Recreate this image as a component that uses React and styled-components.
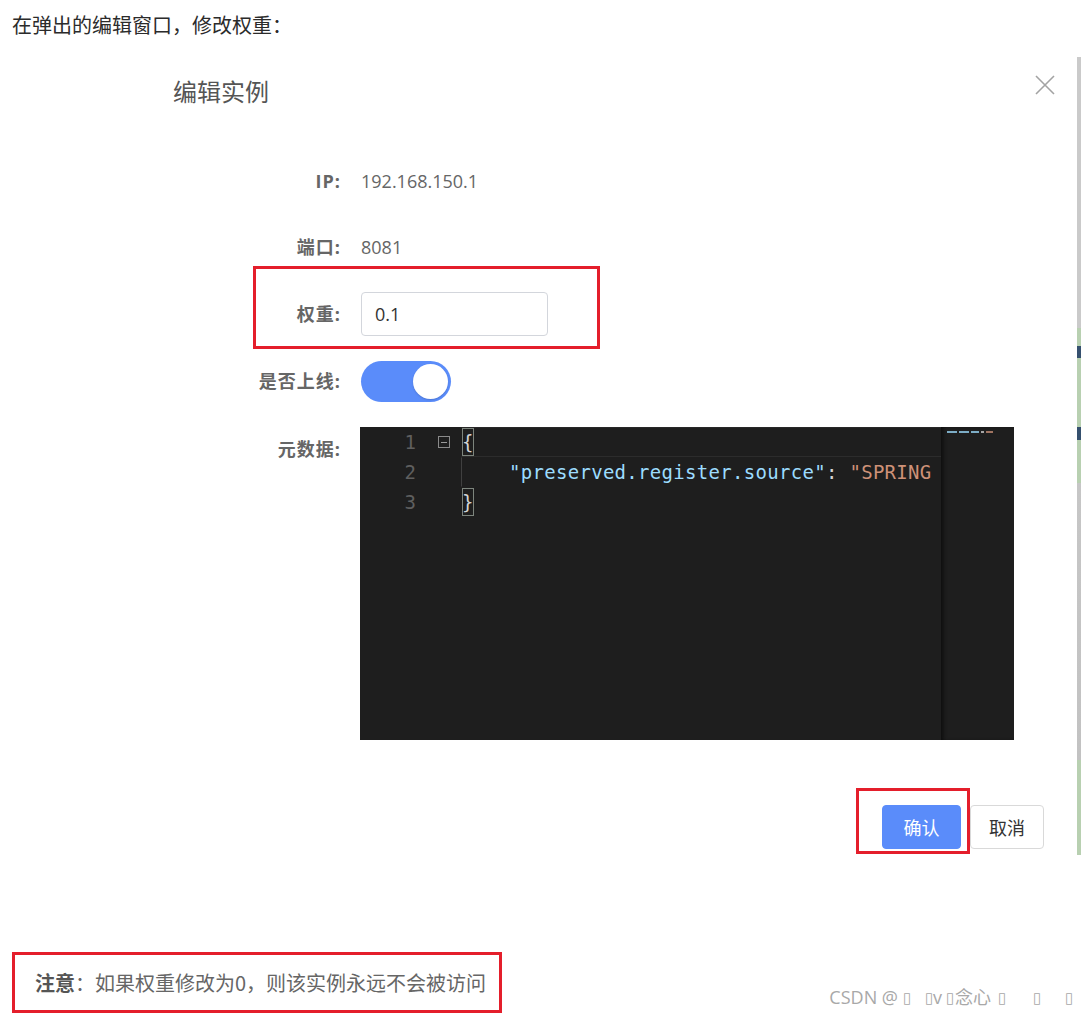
import React from "react";
import styled, { createGlobalStyle } from "styled-components";

const GlobalStyle = createGlobalStyle`
  html, body { margin: 0; padding: 0; background: #fff; }
  body { font-family: "Open Sans", "Noto Sans CJK SC", sans-serif; }
`;

const Page = styled.div`
  width: 1081px;
  height: 1015px;
  overflow: hidden;
  display: flex;
  flex-direction: column;
`;

const Intro = styled.p`
  margin: 0;
  padding: 12px 12px 0;
  font-family: "Noto Sans CJK SC", sans-serif;
  font-size: 20px;
  line-height: 26px;
  color: #2b2b2b;
`;

const Dialog = styled.section`
  display: flex;
  margin-top: 19px;
  height: 798px;
`;

const DialogBody = styled.div`
  flex: 1;
  padding: 0 22px 0 173px;
  display: flex;
  flex-direction: column;
`;

const EdgeStrip = styled.div`
  width: 4px;
  background: linear-gradient(
    to bottom,
    #cacaca 0,
    #cacaca 271px,
    #b8d0b1 271px,
    #b8d0b1 289px,
    #35506e 289px,
    #35506e 301px,
    #b8d0b1 301px,
    #b8d0b1 370px,
    #35506e 370px,
    #35506e 383px,
    #b8d0b1 383px,
    #b8d0b1 426px,
    #c6c6c6 426px,
    #c2c2c2 703px,
    #b8d0b1 703px,
    #b8d0b1 798px
  );
`;

const Header = styled.header`
  display: flex;
  justify-content: space-between;
  align-items: flex-start;
  padding-top: 18px;
`;

const Title = styled.h2`
  margin: 0;
  font-family: "Noto Sans CJK SC", sans-serif;
  font-size: 24px;
  line-height: 32px;
  font-weight: 400;
  color: #555;
`;

const CloseButton = styled.button`
  width: 20px;
  height: 20px;
  padding: 0;
  border: 0;
  background: none;
  display: flex;
  cursor: pointer;
`;

const Form = styled.div`
  margin-top: 52px;
  display: flex;
  flex-direction: column;
`;

const FormItem = styled.div`
  position: relative;
  display: flex;
  align-items: ${(p) => (p.$top ? "flex-start" : "center")};
  min-height: 44px;
  margin-top: ${(p) => p.$mt || 0}px;
`;

const Label = styled.label`
  box-sizing: border-box;
  width: 188px;
  padding-right: 20px;
  text-align: right;
  font-size: 18px;
  line-height: 44px;
  font-weight: 700;
  letter-spacing: 1px;
  color: #666;
  flex-shrink: 0;
`;

const Value = styled.span`
  font-size: 18px;
  line-height: 44px;
  color: #666;
`;

const Input = styled.input`
  box-sizing: border-box;
  width: 187px;
  height: 44px;
  border: 1px solid #d3d6dc;
  border-radius: 4px;
  padding: 0 13px;
  font-family: "Open Sans", sans-serif;
  font-size: 18px;
  color: #333;
  outline: none;
`;

const Highlight = styled.div`
  position: absolute;
  left: ${(p) => p.$l}px;
  top: ${(p) => p.$t}px;
  width: ${(p) => p.$w}px;
  height: ${(p) => p.$h}px;
  box-sizing: border-box;
  border: 3px solid #e41e2b;
  pointer-events: none;
`;

const Toggle = styled.div`
  box-sizing: border-box;
  width: 90px;
  height: 41px;
  border-radius: 21px;
  background: #5a8cfa;
  padding: 3px;
  display: flex;
  justify-content: flex-end;
`;

const Knob = styled.span`
  width: 35px;
  height: 35px;
  border-radius: 50%;
  background: #fff;
  box-shadow: 0 1px 2px rgba(0, 0, 0, 0.15);
`;

const Editor = styled.div`
  width: 654px;
  height: 313px;
  margin-left: -1px;
  background: #1e1e1e;
  display: flex;
  font-family: "DejaVu Sans Mono", "Liberation Mono", monospace;
  font-size: 19px;
  overflow: hidden;
`;

const Gutter = styled.div`
  width: 101px;
  flex-shrink: 0;
`;

const GutterLine = styled.div`
  height: 30px;
  display: flex;
  align-items: center;
`;

const LineNo = styled.span`
  width: 56px;
  text-align: right;
  color: #5f5f5f;
  line-height: 30px;
`;

const Fold = styled.span`
  box-sizing: border-box;
  margin-left: 22px;
  width: 12px;
  height: 12px;
  border: 1px solid #8a8a8a;
  display: flex;
  align-items: center;
  justify-content: center;
  &::after {
    content: "";
    width: 6px;
    height: 1px;
    background: #9a9a9a;
  }
`;

const Code = styled.div`
  width: 480px;
  flex-shrink: 0;
  overflow: hidden;
`;

const CodeLine = styled.div`
  box-sizing: border-box;
  height: 30px;
  line-height: 28px;
  white-space: pre;
  letter-spacing: 0.3px;
  color: #d4d4d4;
  border-top: 1px solid ${(p) => (p.$active ? "#282828" : "transparent")};
  border-bottom: 1px solid ${(p) => (p.$active ? "#2c2c2c" : "transparent")};
  border-left: 1px solid ${(p) => (p.$guide ? "#404040" : "transparent")};
`;

const Bracket = styled.span`
  display: inline-block;
  box-sizing: border-box;
  height: 28px;
  outline: 1px solid #7d857d;
  outline-offset: -1px;
  color: #d4d4d4;
`;

const Key = styled.span`
  color: #9cdcfe;
`;

const Str = styled.span`
  color: #ce9178;
`;

const Minimap = styled.div`
  flex: 1;
  background: #1e1e1e;
  box-shadow: inset 4px 0 4px -2px #0c0c0c;
  padding: 4px 0 0 6px;
`;

const MiniLine = styled.div`
  display: flex;
  gap: 2px;
  height: 2px;
`;

const MiniTok = styled.span`
  height: 2px;
  width: ${(p) => p.$w}px;
  background: ${(p) => p.$c};
  opacity: 0.75;
`;

const Footer = styled.div`
  display: flex;
  justify-content: flex-end;
  gap: 9px;
  margin-top: 65px;
  padding-right: 11px;
`;

const ButtonWrap = styled.div`
  position: relative;
  display: flex;
`;

const Button = styled.button`
  box-sizing: border-box;
  height: 44px;
  width: ${(p) => p.$w}px;
  border-radius: 4px;
  font-family: "Noto Sans CJK SC", sans-serif;
  font-size: 18px;
  cursor: pointer;
  border: 1px solid ${(p) => (p.$primary ? "#5a8cfa" : "#d9d9d9")};
  background: ${(p) => (p.$primary ? "#5a8cfa" : "#fff")};
  color: ${(p) => (p.$primary ? "#fff" : "#333")};
`;

const BottomRow = styled.div`
  display: flex;
  justify-content: space-between;
  align-items: flex-end;
  margin-top: 97px;
  padding: 0 10px 0 12px;
`;

const NoteBox = styled.div`
  box-sizing: border-box;
  width: 490px;
  height: 61px;
  border: 3px solid #e41e2b;
  display: flex;
  align-items: center;
  padding-left: 20px;
  font-family: "Noto Sans CJK SC", sans-serif;
  font-size: 20px;
  color: #666;
`;

const Strong = styled.strong`
  font-weight: 700;
  color: #555;
`;

const Watermark = styled.span`
  display: flex;
  align-items: center;
  font-family: "Open Sans", "DejaVu Sans", "Noto Sans CJK SC", sans-serif;
  font-size: 18px;
  line-height: 24px;
  color: #a8a8a8;
  padding-bottom: 4px;
  white-space: pre;
`;

const Tofu = styled.span`
  display: inline-block;
  width: ${(p) => p.$w}px;
  font-size: 15px;
  margin-left: ${(p) => p.$ml || 0}px;
`;

export default function App() {
  return (
    <Page>
      <GlobalStyle />
      <Intro>在弹出的编辑窗口，修改权重：</Intro>
      <Dialog>
        <DialogBody>
          <Header>
            <Title>编辑实例</Title>
            <CloseButton aria-label="close">
              <svg width="20" height="20" viewBox="0 0 20 20">
                <path d="M1 1 L19 19 M19 1 L1 19" stroke="#a3a3a3" strokeWidth="1.6" fill="none" />
              </svg>
            </CloseButton>
          </Header>
          <Form>
            <FormItem>
              <Label>IP:</Label>
              <Value>192.168.150.1</Value>
            </FormItem>
            <FormItem $mt={22}>
              <Label>端口:</Label>
              <Value>8081</Value>
            </FormItem>
            <FormItem $mt={23}>
              <Label>权重:</Label>
              <Input defaultValue="0.1" />
              <Highlight $l={80} $t={-26} $w={347} $h={83} />
            </FormItem>
            <FormItem $mt={23}>
              <Label>是否上线:</Label>
              <Toggle>
                <Knob />
              </Toggle>
            </FormItem>
            <FormItem $mt={24} $top>
              <Label>元数据:</Label>
              <Editor>
                <Gutter>
                  <GutterLine>
                    <LineNo>1</LineNo>
                    <Fold />
                  </GutterLine>
                  <GutterLine>
                    <LineNo>2</LineNo>
                  </GutterLine>
                  <GutterLine>
                    <LineNo>3</LineNo>
                  </GutterLine>
                </Gutter>
                <Code>
                  <CodeLine $active>
                    <Bracket>{"{"}</Bracket>
                  </CodeLine>
                  <CodeLine $guide>
                    {"    "}
                    <Key>"preserved.register.source"</Key>
                    {": "}
                    <Str>"SPRING</Str>
                  </CodeLine>
                  <CodeLine>
                    <Bracket>{"}"}</Bracket>
                  </CodeLine>
                </Code>
                <Minimap>
                  <MiniLine>
                    <MiniTok $w={10} $c="#9cdcfe" />
                    <MiniTok $w={10} $c="#9cdcfe" />
                    <MiniTok $w={8} $c="#9cdcfe" />
                    <MiniTok $w={3} $c="#d4d4d4" />
                    <MiniTok $w={7} $c="#ce9178" />
                  </MiniLine>
                </Minimap>
              </Editor>
            </FormItem>
          </Form>
          <Footer>
            <ButtonWrap>
              <Button $primary $w={79}>确认</Button>
              <Highlight $l={-26} $t={-17} $w={114} $h={66} />
            </ButtonWrap>
            <Button $w={74}>取消</Button>
          </Footer>
        </DialogBody>
        <EdgeStrip />
      </Dialog>
      <BottomRow>
        <NoteBox>
          <Strong>注意</Strong>：如果权重修改为0，则该实例永远不会被访问
        </NoteBox>
        <Watermark>
          CSDN @<Tofu $w={22} $ml={5}>▯</Tofu>
          <Tofu $w={8}>▯</Tofu>v<Tofu $w={9} $ml={4}>▯</Tofu>念心<Tofu $w={35} $ml={7}>▯</Tofu>
          <Tofu $w={32}>▯</Tofu>
          <Tofu $w={6}>▯</Tofu>
        </Watermark>
      </BottomRow>
    </Page>
  );
}
